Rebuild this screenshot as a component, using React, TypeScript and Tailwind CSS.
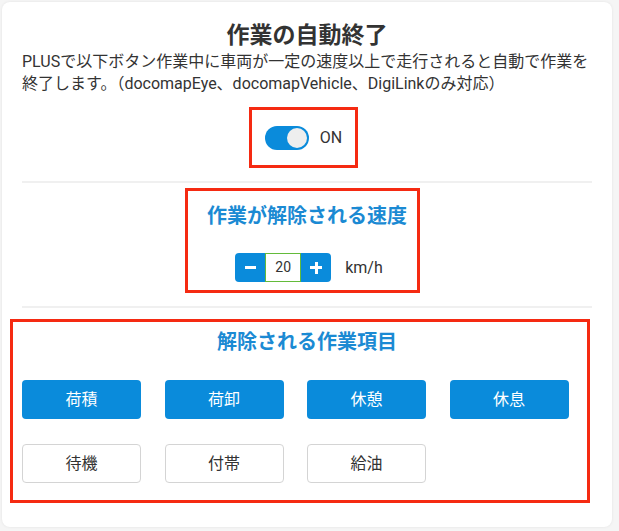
import React, { useState } from 'react';

const activeItems = ['荷積', '荷卸', '休憩', '休息'];
const idleItems = ['待機', '付帯', '給油'];

export default function App() {
  const [on, setOn] = useState(true);
  const [speed, setSpeed] = useState(20);

  return (
    <div
      className="min-h-[531px] w-[619px] bg-[#f5f5f5] pt-[2px] pl-[2px]"
      style={{ fontFamily: 'Roboto, "Noto Sans CJK JP", sans-serif' }}
    >
      <div className="w-[610px] h-[525px] rounded-lg bg-white px-5 pt-[19px] shadow-[0_0_3px_rgba(0,0,0,0.08)]">
        <h1 className="text-center text-[23px] font-bold leading-[30px] text-[#333]">作業の自動終了</h1>
        <p className="text-[16px] leading-[22px] text-[#333]">
          PLUSで以下ボタン作業中に車両が一定の速度以上で走行されると自動で作業を終了します。（docomapEye、docomapVehicle、DigiLinkのみ対応）
        </p>

        {/* toggle */}
        <div className="mt-3 ml-[227px] flex h-[61px] w-[109px] items-center justify-center border-[3px] border-[#f52a12]">
          <button
            onClick={() => setOn(!on)}
            className={`relative h-6 w-11 rounded-full ${on ? 'bg-[#0a8bdb]' : 'bg-[#ccc]'}`}
          >
            <span
              className={`absolute top-[2px] h-5 w-5 rounded-full bg-[#eeeeee] ${on ? 'left-[22px]' : 'left-[2px]'}`}
            />
          </button>
          <span className="ml-[11px] text-[16px] text-[#333]">{on ? 'ON' : 'OFF'}</span>
        </div>

        <div className="mt-[13px] h-[2px] bg-[#f0f0f0]" />

        {/* speed */}
        <div className="mt-[5px] ml-[163px] h-[105px] w-[235px] border-[3px] border-[#f52a12] pl-[9px] pt-[11px]">
          <h2 className="text-center text-[20px] font-bold leading-[28px] text-[#1b8ad3]">作業が解除される速度</h2>
          <div className="mt-[23px] flex items-center justify-center pl-[4px]">
            <div className="flex h-[29px] overflow-hidden rounded">
              <button
                onClick={() => setSpeed(Math.max(0, speed - 1))}
                className="flex w-[30px] items-center justify-center bg-[#0a8bdb]"
              >
                <span className="block h-[3px] w-[11px] bg-white" />
              </button>
              <div className="flex w-[36px] items-center justify-center border border-[#63bb3a] bg-white text-[14px] text-[#333]">
                {speed}
              </div>
              <button
                onClick={() => setSpeed(speed + 1)}
                className="relative flex w-[30px] items-center justify-center bg-[#0a8bdb]"
              >
                <span className="absolute h-[3px] w-[12px] bg-white" />
                <span className="absolute h-[12px] w-[3px] bg-white" />
              </button>
            </div>
            <span className="ml-[14px] text-[16px] text-[#333]">km/h</span>
          </div>
        </div>

        <div className="mt-[13px] h-[2px] bg-[#f0f0f0]" />

        {/* items */}
        <div className="mt-[11px] -ml-[12px] h-[184px] w-[580px] border-[3px] border-[#f52a12] pl-[9px] pt-[6px]">
          <h2 className="pl-[5px] text-center text-[20px] font-bold leading-[28px] text-[#1b8ad3]">解除される作業項目</h2>
          <div className="mt-[24px] grid w-[570px] grid-cols-4 gap-y-[25px]">
            {activeItems.map((item) => (
              <button
                key={item}
                className="h-[39px] w-[119px] rounded bg-[#0a8bdb] text-[16px] text-white"
              >
                {item}
              </button>
            ))}
            {idleItems.map((item) => (
              <button
                key={item}
                className="h-[39px] w-[119px] rounded border border-[#d4d4d4] bg-white text-[16px] text-[#333]"
              >
                {item}
              </button>
            ))}
          </div>
        </div>
      </div>
    </div>
  );
}
